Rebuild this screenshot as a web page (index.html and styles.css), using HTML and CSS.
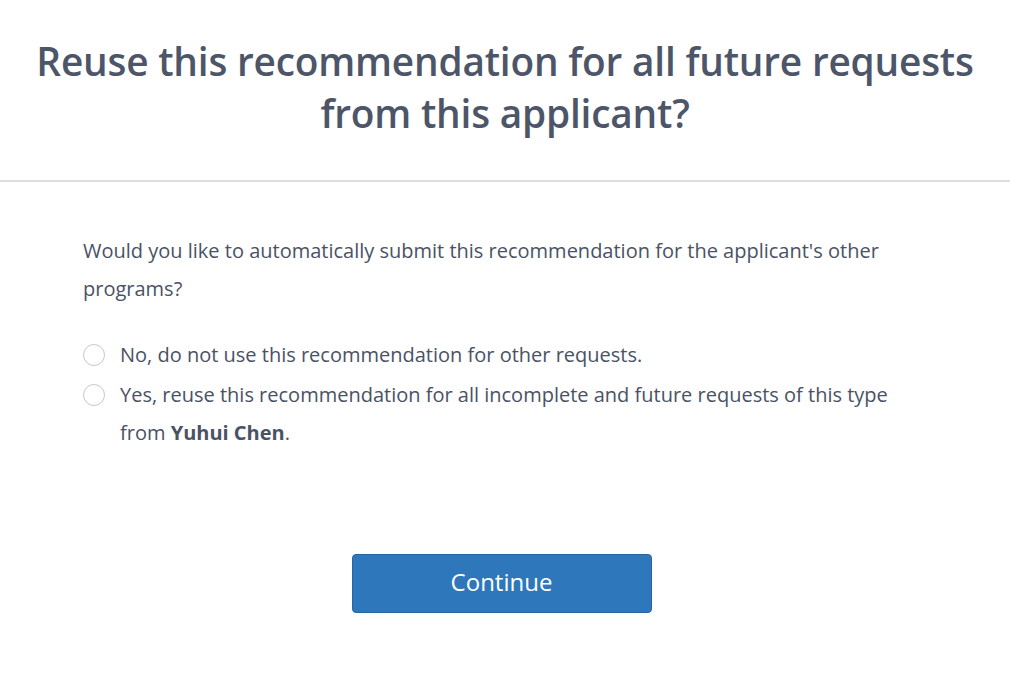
FILE: index.html
```html
<!DOCTYPE html>
<html lang="en">
<head>
<meta charset="utf-8">
<title>Reuse recommendation</title>
<link rel="stylesheet" href="styles.css">
</head>
<body>
<div class="modal">
  <header class="modal-header">
    <h1 class="title">Reuse this recommendation for all future requests from this applicant?</h1>
  </header>
  <section class="modal-body">
    <p class="question">Would you like to automatically submit this recommendation for the applicant's other programs?</p>
    <ul class="options">
      <li class="option">
        <span class="radio"></span>
        <span class="label">No, do not use this recommendation for other requests.</span>
      </li>
      <li class="option">
        <span class="radio"></span>
        <span class="label">Yes, reuse this recommendation for all incomplete and future requests of this type from <strong>Yuhui Chen</strong>.</span>
      </li>
    </ul>
    <div class="actions">
      <button class="btn-primary" type="button">Continue</button>
    </div>
  </section>
</div>
</body>
</html>
```

FILE: styles.css
```css
* { box-sizing: border-box; }
html, body {
  margin: 0;
  padding: 0;
  background: #ffffff;
}
body {
  font-family: "Open Sans", "Noto Sans", sans-serif;
  color: #4a5265;
}
.modal {
  width: 1010px;
}
.modal-header {
  padding: 35px 20px 0;
  height: 182px;
  border-bottom: 2px solid #dedede;
}
.title {
  margin: 0;
  text-align: center;
  font-size: 38.8px;
  line-height: 52px;
  font-weight: 600;
  color: #4d5568;
  letter-spacing: -0.2px;
}
.modal-body {
  padding: 50px 90px 0 83px;
}
.question {
  margin: 0;
  font-size: 20px;
  line-height: 38px;
}
.options {
  list-style: none;
  margin: 28px 0 0;
  padding: 0;
}
.option {
  display: flex;
  align-items: flex-start;
  font-size: 20px;
  line-height: 38px;
  margin-bottom: 2px;
}
.radio {
  flex: none;
  width: 22px;
  height: 22px;
  border: 1.5px solid #c4c8d0;
  border-radius: 50%;
  margin: 8px 15px 0 0;
}
.label {
  flex: 1;
}
.label strong {
  font-weight: 700;
}
.actions {
  display: flex;
  justify-content: center;
  margin-top: 102px;
}
.btn-primary {
  width: 300px;
  height: 59px;
  background: #2e77bb;
  border: 1px solid #2866a3;
  border-radius: 4px;
  color: #ffffff;
  font-family: "Open Sans", "Noto Sans", sans-serif;
  font-size: 24px;
  font-weight: 500;
  padding: 0 0 5px;
}
```
